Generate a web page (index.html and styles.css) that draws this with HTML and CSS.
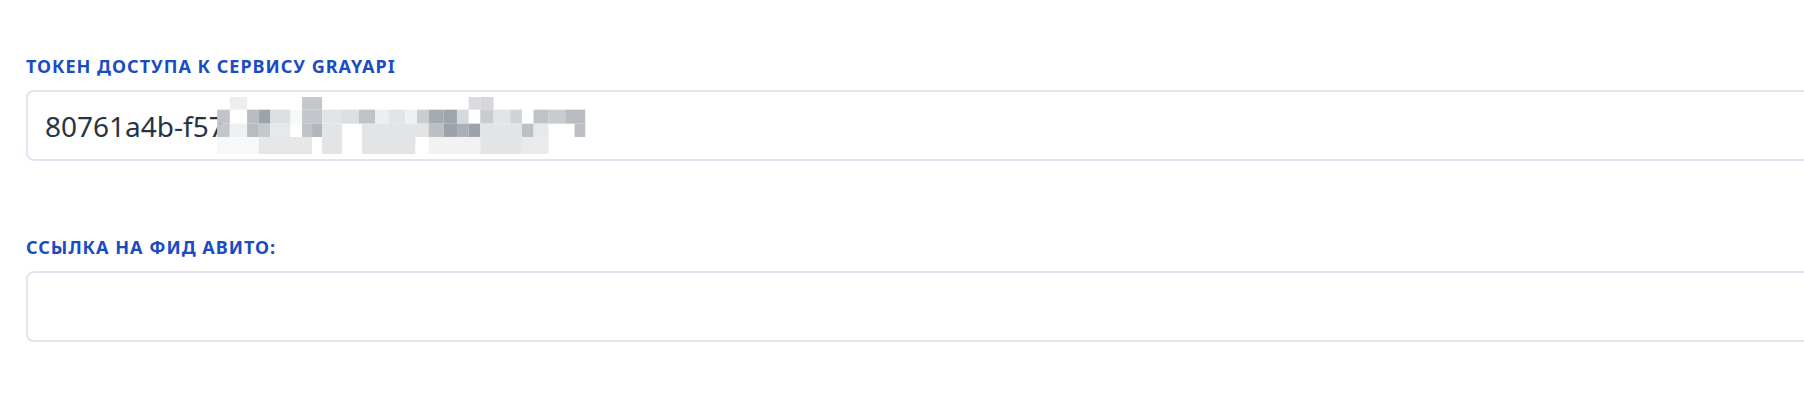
FILE: index.html
```html
<!DOCTYPE html>
<html lang="ru">
<head>
<meta charset="utf-8">
<title>Настройки</title>
<link rel="stylesheet" href="styles.css">
</head>
<body>
<div class="form">
  <div class="field">
    <label class="label">Токен доступа к сервису GrayAPI</label>
    <div class="input">
      <span class="value">80761a4b-f57</span>
      <svg class="redact" width="370" height="57.3" viewBox="50 20 1110 172" aria-hidden="true">
        <rect x="88" y="20" width="52" height="38" fill="#eceef0"/>
        <rect x="305" y="20" width="60" height="38" fill="#c4c7cb"/>
        <rect x="805" y="20" width="35" height="38" fill="#d9dbde"/>
        <rect x="840" y="20" width="40" height="38" fill="#d5d7da"/>

        <rect x="50" y="58" width="38" height="42" fill="#c1c4c8"/>
        <rect x="140" y="58" width="35" height="42" fill="#b9bcc1"/>
        <rect x="175" y="58" width="35" height="42" fill="#9da3ab"/>
        <rect x="210" y="58" width="60" height="42" fill="#dcdfe2"/>
        <rect x="270" y="58" width="35" height="42" fill="#f7f8f8"/>
        <rect x="305" y="58" width="60" height="42" fill="#c3c6ca"/>
        <rect x="365" y="58" width="60" height="42" fill="#e2e4e6"/>
        <rect x="425" y="58" width="50" height="42" fill="#dcdfe2"/>
        <rect x="475" y="58" width="50" height="42" fill="#bfc2c7"/>
        <rect x="525" y="58" width="40" height="42" fill="#eceef0"/>
        <rect x="565" y="58" width="50" height="42" fill="#e2e4e6"/>
        <rect x="615" y="58" width="35" height="42" fill="#eef0f1"/>
        <rect x="650" y="58" width="35" height="42" fill="#c9ccd0"/>
        <rect x="685" y="58" width="45" height="42" fill="#a6abb2"/>
        <rect x="730" y="58" width="40" height="42" fill="#9fa5ad"/>
        <rect x="770" y="58" width="35" height="42" fill="#d5d8dc"/>
        <rect x="840" y="58" width="40" height="42" fill="#c9ccd0"/>
        <rect x="880" y="58" width="50" height="42" fill="#e2e4e6"/>
        <rect x="930" y="58" width="35" height="42" fill="#d0d3d7"/>
        <rect x="1000" y="58" width="45" height="42" fill="#bfc2c7"/>
        <rect x="1045" y="58" width="50" height="42" fill="#c9ccd0"/>
        <rect x="1095" y="58" width="60" height="42" fill="#b8bcc2"/>

        <rect x="50" y="100" width="38" height="40" fill="#c3c6ca"/>
        <rect x="88" y="100" width="52" height="40" fill="#eef0f1"/>
        <rect x="140" y="100" width="35" height="40" fill="#b8bbc0"/>
        <rect x="175" y="100" width="35" height="40" fill="#c5c8cc"/>
        <rect x="210" y="100" width="60" height="40" fill="#e6e8ea"/>
        <rect x="305" y="100" width="30" height="40" fill="#bfc2c7"/>
        <rect x="335" y="100" width="30" height="40" fill="#b3b7bd"/>
        <rect x="365" y="100" width="60" height="40" fill="#e2e4e6"/>
        <rect x="485" y="100" width="200" height="40" fill="#e2e4e6"/>
        <rect x="685" y="100" width="45" height="40" fill="#bcc0c5"/>
        <rect x="730" y="100" width="40" height="40" fill="#9da3ab"/>
        <rect x="770" y="100" width="35" height="40" fill="#abb0b6"/>
        <rect x="805" y="100" width="35" height="40" fill="#9da3ab"/>
        <rect x="840" y="100" width="125" height="40" fill="#e2e4e6"/>
        <rect x="965" y="100" width="35" height="40" fill="#bcc0c5"/>
        <rect x="1000" y="100" width="45" height="40" fill="#e6e8ea"/>
        <rect x="1123" y="100" width="32" height="40" fill="#bcc0c5"/>

        <rect x="50" y="140" width="125" height="52" fill="#f7f8f8"/>
        <rect x="175" y="140" width="160" height="52" fill="#e6e7e9"/>
        <rect x="365" y="140" width="60" height="52" fill="#e2e4e6"/>
        <rect x="485" y="140" width="160" height="52" fill="#e2e4e6"/>
        <rect x="685" y="140" width="155" height="52" fill="#f1f2f3"/>
        <rect x="840" y="140" width="125" height="52" fill="#e2e4e6"/>
        <rect x="965" y="140" width="80" height="52" fill="#e9eaec"/>
      </svg>
    </div>
  </div>
  <div class="field">
    <label class="label">Ссылка на фид Авито:</label>
    <div class="input"></div>
  </div>
</div>
</body>
</html>
```

FILE: styles.css
```css
html, body {
  margin: 0;
  padding: 0;
  background: #ffffff;
  overflow: hidden;
}
body {
  font-family: "Noto Sans", "Open Sans", sans-serif;
}
.form {
  padding: 56px 0 0 26px;
  width: 1800px;
}
.field {
  display: flex;
  flex-direction: column;
  margin-bottom: 76px;
}
.label {
  font-size: 18px;
  line-height: 20px;
  font-weight: 700;
  text-transform: uppercase;
  letter-spacing: 1px;
  color: #1a4cc4;
  margin-bottom: 14px;
}
.input {
  box-sizing: border-box;
  height: 71px;
  border: 2px solid #dfe6f1;
  border-radius: 8px;
  padding: 0 17px;
  display: flex;
  align-items: center;
  background: #fff;
}
.value {
  font-size: 28px;
  line-height: 30px;
  color: #273444;
  white-space: nowrap;
}
.redact {
  display: block;
  flex: none;
  margin-left: -8px;
}
```
